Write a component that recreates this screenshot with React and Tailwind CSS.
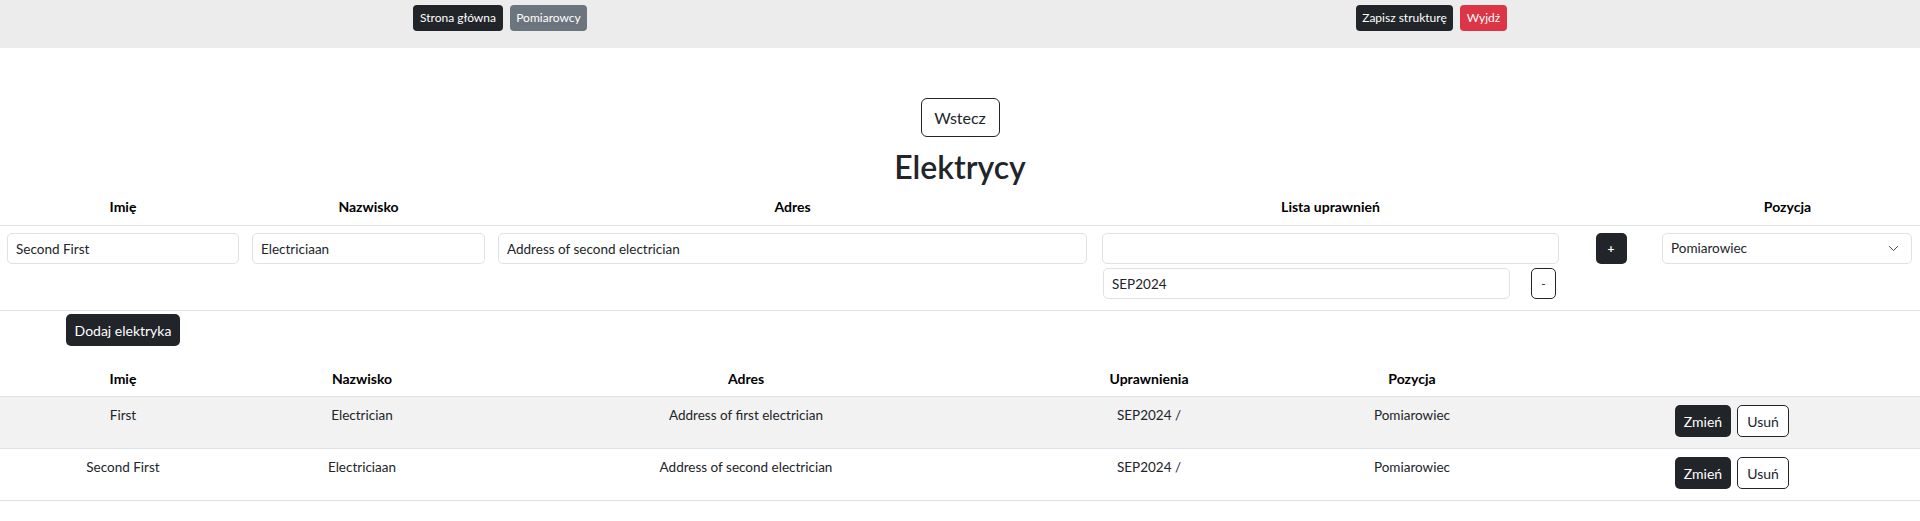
import React from "react";

const font = { fontFamily: "Lato, 'Open Sans', sans-serif" };

function TopBar() {
  return (
    <div className="h-[48px] bg-[#ececec]">
      <div className="mx-auto flex w-[1094px] justify-between pt-[5px]">
        <div className="flex gap-[7px]">
          <button className="flex h-[26px] w-[90px] items-center justify-center rounded-[4px] bg-[#212529] text-[12px] text-white">
            Strona główna
          </button>
          <button className="flex h-[26px] w-[77px] items-center justify-center rounded-[4px] bg-[#6c757d] text-[12px] text-white">
            Pomiarowcy
          </button>
        </div>
        <div className="flex gap-[7px]">
          <button className="flex h-[26px] w-[97px] items-center justify-center rounded-[4px] bg-[#212529] text-[12px] text-white">
            Zapisz strukturę
          </button>
          <button className="flex h-[26px] w-[47px] items-center justify-center rounded-[4px] bg-[#dc3545] text-[12px] text-white">
            Wyjdź
          </button>
        </div>
      </div>
    </div>
  );
}

function Input({ value, className = "" }) {
  return (
    <input
      defaultValue={value}
      className={
        "h-[31px] rounded-[5px] border border-[#dee2e6] bg-white px-2 text-[13.5px] text-[#212529] outline-none " +
        className
      }
    />
  );
}

function FormTable() {
  return (
    <div className="text-[14px] text-[#212529]">
      <div className="flex h-[38px] items-center border-b border-[#dee2e6] font-bold text-black">
        <div className="w-[246px] text-center">Imię</div>
        <div className="w-[245px] text-center">Nazwisko</div>
        <div className="w-[603px] text-center">Adres</div>
        <div className="w-[473px] text-center">Lista uprawnień</div>
        <div className="w-[88px]"></div>
        <div className="w-[265px] text-center">Pozycja</div>
      </div>
      <div className="flex h-[85px] items-start border-b border-[#dee2e6] pt-[7px]">
        <div className="w-[246px] pl-[7px] pr-[7px]">
          <Input value="Second First" className="w-[232px]" />
        </div>
        <div className="w-[245px] pl-[6px]">
          <Input value="Electriciaan" className="w-[233px]" />
        </div>
        <div className="w-[603px] pl-[7px]">
          <Input value="Address of second electrician" className="w-[589px]" />
        </div>
        <div className="flex w-[473px] flex-col gap-[4px] pl-[8px]">
          <Input value="" className="w-[457px]" />
          <div className="flex items-center pl-[1px]">
            <Input value="SEP2024" className="w-[407px]" />
            <button className="ml-[21px] flex h-[31px] w-[25px] items-center justify-center rounded-[5px] border border-[#212529] bg-white text-[12px] text-[#212529]">
              -
            </button>
          </div>
        </div>
        <div className="flex w-[88px] justify-center">
          <button className="flex h-[31px] w-[31px] items-center justify-center rounded-[5px] bg-[#212529] text-[12px] font-bold text-white">
            +
          </button>
        </div>
        <div className="w-[265px] pl-[7px]">
          <div className="flex h-[31px] w-[250px] items-center justify-between rounded-[5px] border border-[#dee2e6] bg-white pl-2 pr-[12px] text-[13.5px] text-[#212529]">
            <span>Pomiarowiec</span>
            <svg width="11" height="11" viewBox="0 0 16 16" fill="none">
              <path d="M2 5l6 6 6-6" stroke="#343a40" strokeWidth="1.4" strokeLinecap="round" strokeLinejoin="round" />
            </svg>
          </div>
        </div>
      </div>
    </div>
  );
}

const cols = ["w-[246px]", "w-[232px]", "w-[536px]", "w-[270px]", "w-[256px]", "w-[380px]"];

const rows = [
  { name: "First", surname: "Electrician", address: "Address of first electrician", striped: true },
  { name: "Second First", surname: "Electriciaan", address: "Address of second electrician", striped: false },
];

function ListTable() {
  return (
    <div className="text-[13.5px] text-[#212529]">
      <div className="flex h-[36px] items-center border-b border-[#dee2e6] text-[14px] font-bold text-black">
        <div className={cols[0] + " text-center"}>Imię</div>
        <div className={cols[1] + " text-center"}>Nazwisko</div>
        <div className={cols[2] + " text-center"}>Adres</div>
        <div className={cols[3] + " text-center"}>Uprawnienia</div>
        <div className={cols[4] + " text-center"}>Pozycja</div>
        <div className={cols[5]}></div>
      </div>
      {rows.map((r) => (
        <div
          key={r.name}
          className={
            "flex h-[52px] items-start border-b border-[#dee2e6] pt-[8px] leading-[21px] " +
            (r.striped ? "bg-[#f2f2f2]" : "bg-white")
          }
        >
          <div className={cols[0] + " text-center"}>{r.name}</div>
          <div className={cols[1] + " text-center"}>{r.surname}</div>
          <div className={cols[2] + " text-center"}>{r.address}</div>
          <div className={cols[3] + " text-center"}>SEP2024 /</div>
          <div className={cols[4] + " text-center"}>Pomiarowiec</div>
          <div className={cols[5] + " flex justify-center gap-[6px] pl-[4px]"}>
            <button className="flex h-[32px] w-[56px] items-center justify-center rounded-[5px] bg-[#212529] text-[14px] text-white">
              Zmień
            </button>
            <button className="flex h-[32px] w-[52px] items-center justify-center rounded-[5px] border border-[#212529] bg-white text-[14px] text-[#212529]">
              Usuń
            </button>
          </div>
        </div>
      ))}
    </div>
  );
}

export default function App() {
  return (
    <div style={font} className="min-h-[521px] w-[1920px] bg-white">
      <TopBar />
      <div className="flex justify-center pt-[50px]">
        <button className="flex h-[39px] w-[79px] items-center justify-center rounded-[6px] border border-[#212529] bg-white text-[16px] text-[#212529]">
          Wstecz
        </button>
      </div>
      <h1 className="mt-[3px] h-[48px] pt-[8px] text-center text-[32px] font-semibold leading-[38px] text-[#212529]">
        Elektrycy
      </h1>
      <FormTable />
      <div className="pl-[66px] pt-[3px]">
        <button className="flex h-[32px] w-[114px] items-center justify-center rounded-[5px] bg-[#212529] text-[14px] text-white">
          Dodaj elektryka
        </button>
      </div>
      <div className="mt-[15px]">
        <ListTable />
      </div>
    </div>
  );
}
